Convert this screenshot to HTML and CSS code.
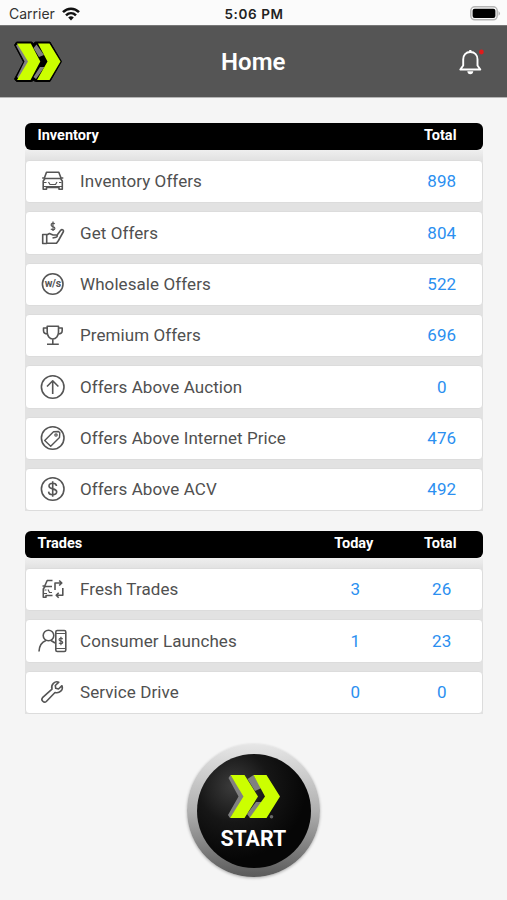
FILE: index.html
```html
<!DOCTYPE html>
<html lang="en">
<head>
    <meta charset="UTF-8">
    <meta name="viewport" content="width=device-width, initial-scale=1.0">
    <title>Home</title>
    <link rel="stylesheet" href="styles.css">
</head>
<body>

<!-- Status bar -->
<div class="status-bar">
    <div class="carrier">
        <span>Carrier</span>
        <svg width="18" height="14" viewBox="0 0 18 14" fill="none" stroke="#111" stroke-width="2.5">
            <path d="M1 5.2C5.5 .6 12.5 .6 17 5.2M4 8.4C6.9 5.6 11.1 5.6 14 8.4"/>
            <path d="M6.2 10.5Q9 8.2 11.8 10.5L9 13.4Z" fill="#111" stroke="none"/>
        </svg>
    </div>
    <div class="time">5:06 PM</div>
    <div class="battery">
        <svg width="31" height="15" viewBox="0 0 31 15">
            <rect x=".8" y=".8" width="26.4" height="13" rx="4" fill="#fafafa" stroke="#b5b5b5" stroke-width="1.5"/>
            <rect x="2.6" y="2.7" width="22.8" height="9.2" rx="2" fill="#000"/>
            <path d="M28.5 5v4.8q3-2.4 0-4.8z" fill="#b5b5b5"/>
        </svg>
    </div>
</div>

<!-- Header -->
<header class="header">
    <svg class="logo" width="50" height="42" viewBox="0 0 50 42">
        <path d="M3.5 1H18.5L20.5 2.5 22.5 1H37L48.500 20.500 37 40.500H22.500L20.500 39.500 18.500 40.500H3.500L1.500 38 10.500 21 1.500 4Z" fill="#000" stroke="#000" stroke-linejoin="round"/>
        <path d="M3 4.500L11.500 20.500 4 36 6 38 17 21 5 3ZM23.500 3.500L20.500 7 26 16 31 14ZM27 26L20.500 36 23 38 31.500 26Z" fill="#808080"/>
        <path d="M4 2.500H17.800L27.300 20.500 17.500 39H4L15 20.500ZM25 2.500H36.500L47.500 20.500 36.500 39H24L34.500 20.500Z" fill="#cf0"/>
    </svg>
    <h1>Home</h1>
    <svg class="bell" width="26" height="28" viewBox="0 0 26 28">
        <path d="M2.300 21.500H22.300L19.500 17.500V11.500C19.500 7 16.800 4 12.300 4S5.200 7 5.200 11.500V17.500Z" fill="none" stroke="#fff" stroke-width="1.900" stroke-linejoin="round"/>
        <path d="M9.300 23.300H15.300Q15 26.300 12.300 26.300T9.300 23.300ZM11.200 2h2.200v2h-2.200z" fill="#fff"/>
        <circle cx="23.400" cy="4" r="2.400" fill="#e01b1b"/>
    </svg>
</header>

<main class="content">
    <!-- Inventory -->
    <section class="group">
        <div class="group-title">
            <span class="name">Inventory</span>
            <span class="total">Total</span>
        </div>
        <div class="list">
            <div class="row">
                <svg class="icon" viewBox="0 0 30 30">
                    <path d="M6.200 12.500L8.500 6.200H20.800L23.200 12.500M4.200 12H6.500M23 12H25.300M5.200 23.300V15L7 12.500H22.500L24.300 15V23.300H21V21.500H8.500V23.300Z"/>
                    <path class="thin" d="M6 16.500H8.500M21 16.500H23.500M10.500 16L12 18.500H17.500L19 16M5.500 20.500H24"/>
                </svg>
                <span class="name">Inventory Offers</span><span class="total">898</span>
            </div>
            <div class="row">
                <svg class="icon" viewBox="0 0 30 30">
                    <path d="M4.700 16.500H8.700V25.500H4.700ZM8.700 17L11.500 15.500 15 17H18C20 17 19.500 19 18 19.200L14.500 20M18.800 17.500L22.500 12.500C24 10.800 26.300 12 25.200 14L20.500 22.500 18.500 25.200H8.700"/>
                    <path class="thin" d="M16.800 5.900C15 4.500 12.800 5.500 13.200 7.300C13.500 9 16.900 8.200 16.900 10.300C16.900 12.200 14.200 12.300 12.800 10.900M15 3.500V13"/>
                </svg>
                <span class="name">Get Offers</span><span class="total">804</span>
            </div>
            <div class="row">
                <svg class="icon" viewBox="0 0 30 30">
                    <circle cx="14.700" cy="15" r="10.300"/>
                    <text class="ws" x="14.700" y="18.300" text-anchor="middle">w/s</text>
                </svg>
                <span class="name">Wholesale Offers</span><span class="total">522</span>
            </div>
            <div class="row">
                <svg class="icon" viewBox="0 0 30 30">
                    <path d="M9.200 6.200H20.500V12C20.500 16 18 19 14.800 19S9.200 16 9.200 12ZM9.200 8H5.500V10.500C5.500 13 7.500 14 9.700 14M20.500 8H24.200V10.500C24.200 13 22.200 14 20 14M14.800 19V24M9 24.300H20.800"/>
                </svg>
                <span class="name">Premium Offers</span><span class="total">696</span>
            </div>
            <div class="row">
                <svg class="icon" viewBox="0 0 30 30">
                    <circle cx="14.700" cy="15" r="11.300"/>
                    <path d="M14.700 22V9M9 14.500L14.700 8.800 20.400 14.500"/>
                </svg>
                <span class="name">Offers Above Auction</span><span class="total">0</span>
            </div>
            <div class="row">
                <svg class="icon" viewBox="0 0 30 30">
                    <circle cx="14.700" cy="15" r="11.300"/>
                    <path class="tag" d="M15.500 8.700L20.500 8.500 21.800 9.800 21.500 14.500 12.700 23.200 6.700 17.500Z"/>
                    <circle class="thin" cx="18" cy="12" r="1.200"/>
                </svg>
                <span class="name">Offers Above Internet Price</span><span class="total">476</span>
            </div>
            <div class="row">
                <svg class="icon" viewBox="0 0 30 30">
                    <circle cx="14.700" cy="15" r="11.300"/>
                    <path d="M18.500 12C18.300 10 16.800 9.300 14.700 9.300C12.500 9.300 11 10.400 11 12.100C11 16 18.700 13.700 18.700 17.800C18.700 19.600 17 20.700 14.700 20.700C12.300 20.700 10.700 19.700 10.600 17.600M14.700 7.300V22.700"/>
                </svg>
                <span class="name">Offers Above ACV</span><span class="total">492</span>
            </div>
        </div>
    </section>

    <!-- Trades -->
    <section class="group">
        <div class="group-title">
            <span class="name">Trades</span>
            <span class="today">Today</span>
            <span class="total">Total</span>
        </div>
        <div class="list">
            <div class="row">
                <svg class="icon" viewBox="0 0 30 30">
                    <path d="M14.500 6.500H9.200L6.500 12.500M4.500 12H6.500M14 12.500H7L5.300 15V23.300H8V21.500H14.500M17 16V9H23.500M21.200 6.500L23.800 9 21.200 11.500M24.800 14V21.200H18.500M20.700 18.700L18.200 21.200 20.700 23.700"/>
                    <path class="thin" d="M6.500 16H8.500M10 15.500L11.500 18.500H14M6 19.500H9"/>
                </svg>
                <span class="name">Fresh Trades</span><span class="today">3</span><span class="total">26</span>
            </div>
            <div class="row">
                <svg class="icon" viewBox="0 0 30 30">
                    <circle cx="10.500" cy="9.500" r="5.300"/>
                    <path d="M1 25.500C1.300 19 4.500 15.800 8 14.500M13 14.500L17 17"/>
                    <rect x="17.800" y="4.500" width="10" height="21" rx="1.500"/>
                    <path class="thin" d="M18 7.500H28M18 22.500H28M24.700 12.900C23 11.600 21 12.200 21.100 13.700C21.200 15.500 24.800 14.600 24.700 16.500C24.600 18.100 22.200 18.100 20.900 16.900M22.900 10.700V19.300"/>
                </svg>
                <span class="name">Consumer Launches</span><span class="today">1</span><span class="total">23</span>
            </div>
            <div class="row">
                <svg class="icon" viewBox="0 0 30 30">
                    <path d="M20.800 5.200C17 3.700 12.500 7.300 14 12.200L4.500 20.700C2.500 23 6 26.500 8.300 24.500L17 15.500C21.500 16.800 25.500 13 24 8.700L20.500 12 17.700 11.300 17.300 8.500Z"/>
                </svg>
                <span class="name">Service Drive</span><span class="today">0</span><span class="total">0</span>
            </div>
        </div>
    </section>

    <button class="start" type="button">
        <span class="start-inner">
            <svg width="54" height="46" viewBox="0 0 54 46">
                <path d="M3.500 1L1.500 4 11.500 22.500 1 41 3 44 18 22.500ZM26.500 1L20.500 5 28 17 34.500 14ZM29 28L20 40 23 44 35 28Z" fill="#808080"/>
                <path d="M3.500 1H17.500L31 22.500 17.500 44H3L16.500 22.500ZM26.500 1H39.500L53 22.500 39.500 44H22.500L38 22.500Z" fill="#cf0"/>
                <circle cx="44.500" cy="42.700" r="1.800" fill="#666"/>
            </svg>
            <span class="start-text">START</span>
        </span>
    </button>
</main>

</body>
</html>
```
FILE: styles.css
```css
/* General */
* {
    box-sizing: border-box;
}

body {
    margin: 0;
    height: 900px;
    overflow: hidden;
    background-color: #f5f5f5;
    font-family: Roboto, Arial, sans-serif;
    color: #505050;
}

/* Status bar */
.status-bar {
    display: grid;
    grid-template-columns: 1fr auto 1fr;
    align-items: center;
    height: 25px;
    padding: 2px 6px 0 9px;
    background-color: #fbfbfb;
    font-family: Inter, sans-serif;
    font-size: 14px;
    color: #333;
}

.carrier {
    display: flex;
    align-items: center;
    gap: 7px;
}

.time {
    margin-right: 2px;
    font-weight: 600;
    font-size: 13.5px;
    letter-spacing: 0.6px;
    color: #222;
}

.battery {
    display: flex;
    justify-content: flex-end;
}

/* Header */
.header {
    display: grid;
    grid-template-columns: 1fr auto 1fr;
    align-items: center;
    height: 73px;
    padding: 0 23px 0 12.5px;
    background-color: #555;
    border-top: 1px solid #777;
    border-bottom: 1px solid #b5b5b5;
}

.header h1 {
    margin: 0 0 0 10px;
    font-size: 24px;
    font-weight: 600;
    color: #fff;
}

.logo,
.bell {
    display: block;
}

.bell {
    justify-self: end;
}

/* Lists */
.content {
    padding: 25px 24.5px 0 25px;
}

.group {
    margin-bottom: 19.7px;
}

.group-title {
    display: flex;
    height: 27px;
    padding: 0 0 2px 12.5px;
    align-items: center;
    border-radius: 6px;
    background-color: #000;
    color: #fff;
    font-size: 14.5px;
    font-weight: 700;
}

.list {
    display: flex;
    flex-direction: column;
    gap: 8px;
    padding-top: 10px;
    background: linear-gradient(#efefef, #e2e2e2 10px);
}

.row {
    display: flex;
    align-items: center;
    height: 43.33px;
    padding: 0 0 0.6px 12px;
    border: 1px solid #dcdcdc;
    border-radius: 4px;
    background-color: #fff;
    font-size: 17px;
    letter-spacing: 0.08px;
}

.name {
    flex: 1;
}

.today,
.total {
    width: 86.5px;
    text-align: center;
}

.total {
    margin-right: -3px;
}

.row .total {
    margin-right: -3.5px;
}

.group-title .today,
.group-title .total {
    padding-right: 4px;
}

.row .today,
.row .total {
    color: #2b8ff0;
}

/* Icons */
.icon {
    width: 30px;
    height: 30px;
    margin-right: 12px;
    fill: none;
    stroke: #555;
    stroke-width: 1.6;
    stroke-linejoin: round;
}

.icon .thin {
    stroke-width: 1.2;
}

.icon .tag {
    stroke-width: 1.4;
}

.icon .ws {
    font-size: 10.5px;
    font-weight: 700;
    letter-spacing: -0.3px;
    fill: #555;
    stroke: none;
}

/* Start button */
.start {
    display: block;
    width: 133px;
    height: 133px;
    margin: 30.3px auto 0;
    padding: 9.5px;
    border: none;
    border-radius: 50%;
    background: linear-gradient(#e6e6e6, #b0b0b0 50%, #5a5a5a);
    box-shadow: 0 1px 3px rgba(0, 0, 0, 0.3);
    font-family: inherit;
}

.start-inner {
    display: flex;
    flex-direction: column;
    align-items: center;
    height: 114px;
    padding-top: 20px;
    border-radius: 50%;
    background: radial-gradient(circle at 32% 28%, #3c3c3c, #161616 32%, #060606 65%);
}

.start-text {
    margin: 6px 1px 0 0;
    font-size: 21.3px;
    font-weight: 700;
    line-height: 26px;
    color: #fff;
}
```
